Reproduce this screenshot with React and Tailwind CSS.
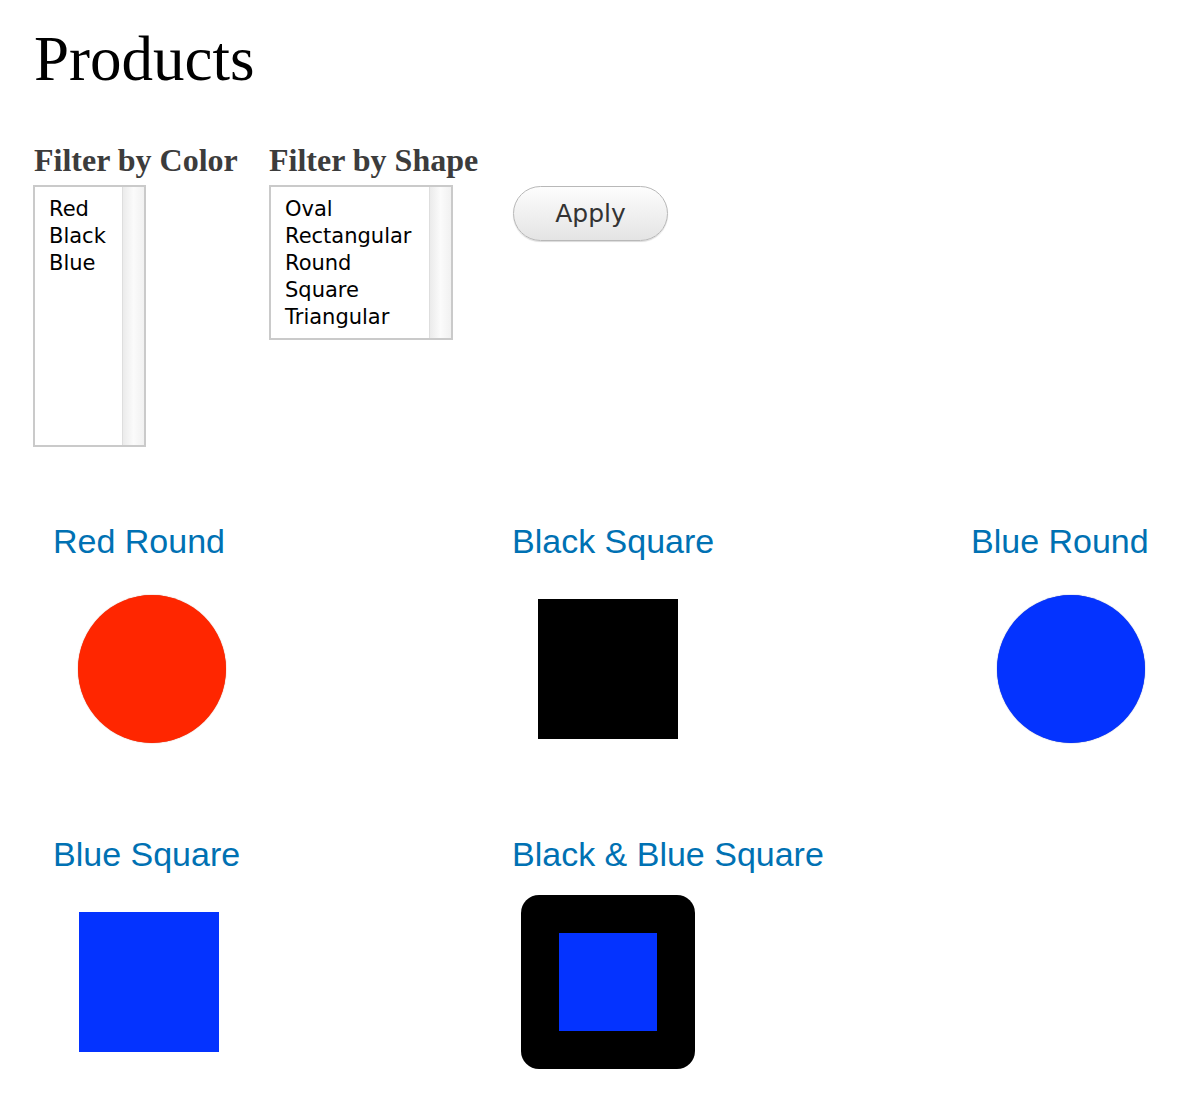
const serif = "font-['Liberation_Serif',Georgia,serif]";
const ui = "font-['DejaVu_Sans',Verdana,sans-serif]";

const ListBox = ({ items, className }) => (
  <div className={`flex border-2 border-[#cacaca] bg-white ${className}`}>
    <ul className={`flex-1 pl-[14px] pt-[9px] text-[21px] leading-[27px] text-black ${ui}`}>
      {items.map((item) => (
        <li key={item}>{item}</li>
      ))}
    </ul>
    <div className="w-[22px] border-l border-[#dedede] bg-gradient-to-r from-[#ebebeb] via-[#fbfbfb] to-[#f1f1f1]" />
  </div>
);

const Shape = ({ kind }) => {
  if (kind === "red-round")
    return <div className="ml-[6px] h-[148px] w-[148px] rounded-full bg-[#ff2600] shadow-[0_0_1px_#c03a1e]" />;
  if (kind === "blue-round")
    return <div className="ml-[8px] h-[148px] w-[148px] rounded-full bg-[#0433ff] shadow-[0_0_1px_#2a3ea8]" />;
  if (kind === "black-square") return <div className="h-[140px] w-[140px] bg-black" />;
  if (kind === "blue-square") return <div className="h-[140px] w-[140px] bg-[#0433ff]" />;
  return (
    <div className="flex h-[174px] w-[174px] items-center justify-center rounded-[18px] bg-black">
      <div className="h-[98px] w-[98px] bg-[#0433ff]" />
    </div>
  );
};

const products = [
  { title: "Red Round", kind: "red-round" },
  { title: "Black Square", kind: "black-square" },
  { title: "Blue Round", kind: "blue-round" },
  { title: "Blue Square", kind: "blue-square" },
  { title: "Black & Blue Square", kind: "black-blue" },
];

export default function App() {
  return (
    <div className="min-h-screen overflow-hidden bg-white pl-[34px] pt-[28px]">
      <h1 className={`text-[63px] leading-[63px] text-black ${serif}`}>Products</h1>

      <div className="mt-[51px] flex">
        <div className="w-[235px]">
          <h3 className={`whitespace-nowrap text-[32px] font-bold leading-[36px] text-[#3c3c3c] ${serif}`}>
            Filter by Color
          </h3>
          <ListBox items={["Red", "Black", "Blue"]} className="mt-[7px] h-[262px] w-[113px] -ml-px" />
        </div>
        <div className="w-[244px]">
          <h3 className={`whitespace-nowrap text-[32px] font-bold leading-[36px] text-[#3c3c3c] ${serif}`}>
            Filter by Shape
          </h3>
          <ListBox
            items={["Oval", "Rectangular", "Round", "Square", "Triangular"]}
            className="mt-[7px] h-[155px] w-[184px]"
          />
        </div>
        <div className="pt-[44px]">
          <button
            className={`h-[55px] w-[155px] rounded-full border border-[#b8b8b8] bg-gradient-to-b from-[#fdfdfd] to-[#e4e4e4] text-[25px] text-[#333] shadow-[0_1px_1px_rgba(0,0,0,0.15)] ${ui}`}
          >
            Apply
          </button>
        </div>
      </div>

      <div className="mt-[74px] ml-[19px] grid grid-cols-[459px_459px_222px]">
        {products.map((p) => (
          <div key={p.title} className="pb-[75px]">
            <h2 className="whitespace-nowrap font-['Liberation_Sans',Arial,sans-serif] text-[34px] leading-[40px] text-[#0071b3]">
              {p.title}
            </h2>
            <div className="mt-[18px] flex h-[180px] w-[192px] items-center justify-center">
              <Shape kind={p.kind} />
            </div>
          </div>
        ))}
      </div>
    </div>
  );
}
